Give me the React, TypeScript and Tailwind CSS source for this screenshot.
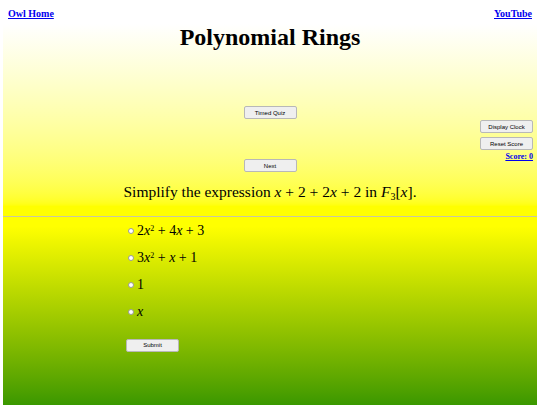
import React from 'react';

const serif = { fontFamily: '"Liberation Serif", "Times New Roman", serif' };

function V({ children }: { children: React.ReactNode }) {
  return <i className="italic">{children}</i>;
}

function Op({ children }: { children: React.ReactNode }) {
  return <span className="mx-[0.25em]">{children}</span>;
}

function QuizButton({ label, className = '' }: { label: string; className?: string }) {
  return (
    <button
      className={`h-[13px] w-[53px] rounded-[2px] border border-[#b8b8b8] bg-[#efefef] text-[6px] leading-none text-black ${className}`}
      style={{ fontFamily: '"Liberation Sans", Arial, sans-serif' }}
    >
      {label}
    </button>
  );
}

const options: React.ReactNode[] = [
  <>
    2<V>x</V>
    <sup className="text-[8px]">2</sup>
    <Op>+</Op>4<V>x</V>
    <Op>+</Op>3
  </>,
  <>
    3<V>x</V>
    <sup className="text-[8px]">2</sup>
    <Op>+</Op>
    <V>x</V>
    <Op>+</Op>1
  </>,
  <>1</>,
  <>
    <V>x</V>
  </>,
];

export default function App() {
  return (
    <div className="min-h-screen w-full bg-white text-black" style={serif}>
      {/* top links */}
      <div className="flex justify-between px-[8px] pt-[8px] text-[10px] font-bold leading-[12px]">
        <a href="#" className="text-[#0000ee] underline">
          Owl Home
        </a>
        <a href="#" className="text-[#0000ee] underline">
          YouTube
        </a>
      </div>

      {/* upper panel */}
      <div className="mx-[3px] mt-[4px] h-[192px] bg-gradient-to-b from-white to-[#ffff00] to-95%">
        <h1 className="text-center text-[24px] font-bold leading-[26px]">Polynomial Rings</h1>

        <div className="mt-[56px] grid grid-cols-[1fr_auto_1fr]">
          <div />
          <div className="flex flex-col items-center">
            <QuizButton label="Timed Quiz" />
            <QuizButton label="Next" className="mt-[40px]" />
          </div>
          <div className="flex flex-col items-end pr-[4px] pt-[14px]">
            <QuizButton label="Display Clock" />
            <QuizButton label="Reset Score" className="mt-[4px]" />
            <a href="#" className="mt-[2px] text-[8px] font-bold leading-[10px] text-[#0000ee] underline">
              Score: 0
            </a>
          </div>
        </div>

        <p className="mt-[10px] text-center text-[15.5px] leading-[20px] text-black">
          Simplify the expression <V>x</V>
          <Op>+</Op>2<Op>+</Op>2<V>x</V>
          <Op>+</Op>2 in <V>F</V>
          <sub className="text-[10px]">3</sub>[<V>x</V>].
        </p>
      </div>

      <hr className="mx-[3px] border-0 border-t border-[#c8c8a0] bg-[#ffff00]" />

      {/* lower panel */}
      <div className="mx-[3px] h-[188px] bg-gradient-to-b from-[#ffff00] from-5% to-[#3a9800]">
        <div className="flex flex-col gap-[12px] pl-[125px] pt-[6px]">
          {options.map((opt, i) => (
            <label key={i} className="flex h-[15px] items-center text-[14px] leading-[15px] text-black">
              <span className="mr-[3px] inline-block h-[6px] w-[6px] rounded-full border border-[#999] bg-white" />
              <span>{opt}</span>
            </label>
          ))}
        </div>
        <div className="pl-[123px] pt-[11px]">
          <QuizButton label="Submit" />
        </div>
      </div>
    </div>
  );
}
